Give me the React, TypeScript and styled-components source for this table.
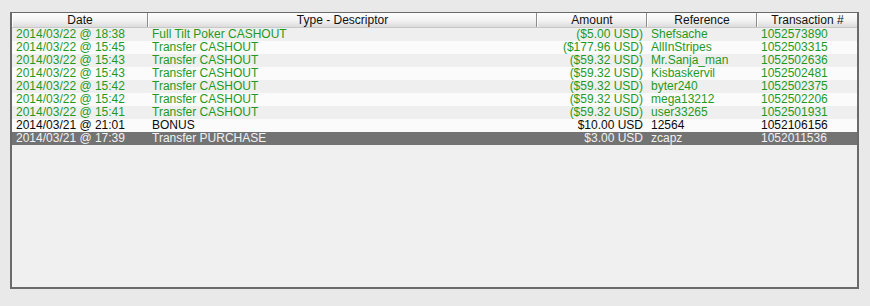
import { FC } from "react";
import styled, { createGlobalStyle } from "styled-components";

const GlobalStyle = createGlobalStyle`
    body {
        margin: 0;
        background: #e9e9e9;
        font-family: "Liberation Sans", Arial, sans-serif;
        font-size: 11px;
    }
`;

type Txn = {
    date: string;
    type: string;
    amount: string;
    reference: string;
    id: string;
    kind: "credit" | "debit";
};

const rows: Txn[] = [
    { date: "2014/03/22 @ 18:38", type: "Full Tilt Poker CASHOUT", amount: "($5.00 USD)", reference: "Shefsache", id: "1052573890", kind: "credit" },
    { date: "2014/03/22 @ 15:45", type: "Transfer CASHOUT", amount: "($177.96 USD)", reference: "AllInStripes", id: "1052503315", kind: "credit" },
    { date: "2014/03/22 @ 15:43", type: "Transfer CASHOUT", amount: "($59.32 USD)", reference: "Mr.Sanja_man", id: "1052502636", kind: "credit" },
    { date: "2014/03/22 @ 15:43", type: "Transfer CASHOUT", amount: "($59.32 USD)", reference: "Kisbaskervil", id: "1052502481", kind: "credit" },
    { date: "2014/03/22 @ 15:42", type: "Transfer CASHOUT", amount: "($59.32 USD)", reference: "byter240", id: "1052502375", kind: "credit" },
    { date: "2014/03/22 @ 15:42", type: "Transfer CASHOUT", amount: "($59.32 USD)", reference: "mega13212", id: "1052502206", kind: "credit" },
    { date: "2014/03/22 @ 15:41", type: "Transfer CASHOUT", amount: "($59.32 USD)", reference: "user33265", id: "1052501931", kind: "credit" },
    { date: "2014/03/21 @ 21:01", type: "BONUS", amount: "$10.00 USD", reference: "12564", id: "1052106156", kind: "debit" },
    { date: "2014/03/21 @ 17:39", type: "Transfer PURCHASE", amount: "$3.00 USD", reference: "zcapz", id: "1052011536", kind: "debit" },
];

const selectedIndex = 8;

const COLUMNS = "136px 389px 110px 110px 1fr";

const Page = styled.div`
    padding: 12px 11px 17px 10px;
`;

const Table = styled.div`
    height: 277px;
    border: 2px solid #6a6a6a;
    border-top-width: 1px;
    background: #f0f0f0;
    box-sizing: border-box;
`;

const HeaderRow = styled.div`
    display: grid;
    grid-template-columns: ${COLUMNS};
    height: 14px;
    background: linear-gradient(#fdfdfd 0%, #f2f2f2 55%, #dcdcdc 100%);
    border-bottom: 1px solid #c8c8c8;
`;

const HeaderCell = styled.div`
    text-align: center;
    line-height: 14px;
    font-size: 12px;
    color: #111;
    border-right: 1px solid #8c8c8c;
    border-left: 1px solid #ffffff;
    &:last-child {
        border-right: none;
    }
`;

const Row = styled.div<{ $striped: boolean; $selected: boolean; $kind: "credit" | "debit" }>`
    display: grid;
    grid-template-columns: ${COLUMNS};
    height: 13px;
    line-height: 13px;
    font-size: 12px;
    background: ${({ $selected, $striped }) =>
        $selected ? "#737373" : $striped ? "#efefef" : "#fbfbfb"};
    color: ${({ $selected, $kind }) =>
        $selected ? "#f2f2f2" : $kind === "credit" ? "#1f9a1f" : "#0a0a0a"};
`;

const Cell = styled.div<{ $align?: "left" | "right" }>`
    white-space: nowrap;
    overflow: hidden;
    text-align: ${({ $align }) => $align ?? "left"};
    padding: ${({ $align }) => ($align === "right" ? "0 4px 0 0" : "0 0 0 4px")};
`;

const App: FC = () => (
    <>
        <GlobalStyle />
        <Page>
            <Table>
                <HeaderRow>
                    <HeaderCell>Date</HeaderCell>
                    <HeaderCell>Type - Descriptor</HeaderCell>
                    <HeaderCell>Amount</HeaderCell>
                    <HeaderCell>Reference</HeaderCell>
                    <HeaderCell>Transaction #</HeaderCell>
                </HeaderRow>
                {rows.map((r, i) => (
                    <Row
                        key={r.id}
                        $striped={i % 2 === 0}
                        $selected={i === selectedIndex}
                        $kind={r.kind}
                    >
                        <Cell>{r.date}</Cell>
                        <Cell>{r.type}</Cell>
                        <Cell $align="right">{r.amount}</Cell>
                        <Cell>{r.reference}</Cell>
                        <Cell>{r.id}</Cell>
                    </Row>
                ))}
            </Table>
        </Page>
    </>
);

export default App;
